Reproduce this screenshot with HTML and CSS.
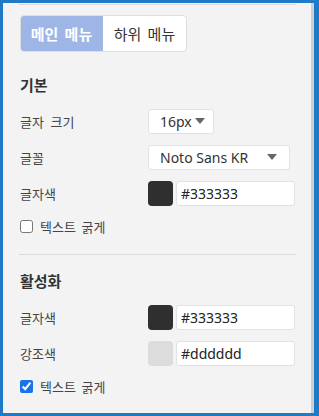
FILE: index.html
```html
<!DOCTYPE html>
<html lang="ko">
<head>
    <meta charset="UTF-8">
    <title>메뉴 설정</title>
    <link rel="stylesheet" href="styles.css">
</head>
<body>
<div class="panel">
    <div class="line top-line"></div>
    <div class="tabs">
        <div class="tab active">메인 메뉴</div>
        <div class="tab">하위 메뉴</div>
    </div>

    <h3 class="title first">기본</h3>
    <div class="row">
        <span class="label">글자 크기</span>
        <div class="select small">16px<i class="caret"></i></div>
    </div>
    <div class="row">
        <span class="label">글꼴</span>
        <div class="select wide">Noto Sans KR<i class="caret"></i></div>
    </div>
    <div class="row">
        <span class="label">글자색</span>
        <span class="swatch dark"></span>
        <input class="color-text" value="#333333">
    </div>
    <label class="check"><input type="checkbox"> 텍스트 굵게</label>

    <div class="line sep"></div>

    <h3 class="title second">활성화</h3>
    <div class="row">
        <span class="label">글자색</span>
        <span class="swatch dark"></span>
        <input class="color-text" value="#333333">
    </div>
    <div class="row">
        <span class="label">강조색</span>
        <span class="swatch light"></span>
        <input class="color-text" value="#dddddd">
    </div>
    <label class="check"><input type="checkbox" checked> 텍스트 굵게</label>
</div>
</body>
</html>
```

FILE: styles.css
```css
html, body {
    margin: 0;
    height: 100%;
}

body {
    background: #1f7bc8;
    padding: 3px 5px 3px 3px;
    box-sizing: border-box;
    font-family: "Noto Sans CJK KR", "Noto Sans", sans-serif;
    color: #333;
}

.panel {
    height: 100%;
    background: #f3f3f3;
    border-right: 3px solid #cfcfcf;
    box-sizing: border-box;
    padding: 1px 0 0 17px;
    overflow: hidden;
}

.line {
    height: 1px;
    background: #dadada;
    width: 277px;
    margin-left: -1px;
}

.tabs {
    display: flex;
    margin-top: 10px;
    width: 167px;
    height: 37px;
    border-radius: 4px;
    overflow: hidden;
    background: #fff;
    box-sizing: border-box;
    border: 1px solid #dedede;
}

.tab {
    flex: 1;
    display: flex;
    align-items: center;
    justify-content: center;
    font-size: 15px;
    word-spacing: 2px;
    color: #333;
}

.tab.active {
    background: #9db6e6;
    color: #fff;
    font-weight: bold;
    margin: -1px 0 -1px -1px;
}

.title {
    margin: 22px 0 7px;
    font-size: 15px;
    font-weight: 600;
    line-height: 22px;
    color: #333;
}

.title.second {
    margin-top: 15px;
}

.row {
    display: flex;
    align-items: center;
    height: 36px;
}

.label {
    width: 128px;
    font-size: 13px;
    word-spacing: 3px;
    color: #444;
}

.select {
    display: flex;
    align-items: center;
    justify-content: space-between;
    height: 25px;
    box-sizing: border-box;
    background: #fff;
    border: 1px solid #e2e2e2;
    border-radius: 3px;
    padding: 0 8px 0 11px;
    font-family: "Noto Sans", sans-serif;
    font-size: 14px;
    color: #333;
}

.select.small {
    width: 66px;
}

.select.wide {
    width: 142px;
    padding-right: 12px;
}

.caret {
    width: 0;
    height: 0;
    border-left: 5px solid transparent;
    border-right: 5px solid transparent;
    border-top: 6px solid #666;
}

.swatch {
    width: 25px;
    height: 25px;
    border-radius: 4px;
    margin-right: 3px;
}

.swatch.dark {
    background: #2f2f2f;
}

.swatch.light {
    background: #dcdcdc;
}

.color-text {
    width: 119px;
    height: 25px;
    box-sizing: border-box;
    border: 1px solid #e2e2e2;
    border-radius: 3px;
    padding: 0 4px;
    font-family: "Noto Sans", sans-serif;
    font-size: 14px;
    color: #222;
    outline: none;
}

.check {
    display: flex;
    align-items: center;
    height: 30px;
    font-size: 13px;
    word-spacing: 2px;
    color: #444;
}

.check input {
    margin: 0 7px 0 0;
    width: 13px;
    height: 13px;
    accent-color: #1a73e8;
}

.sep {
    margin-top: 13px;
}
```
